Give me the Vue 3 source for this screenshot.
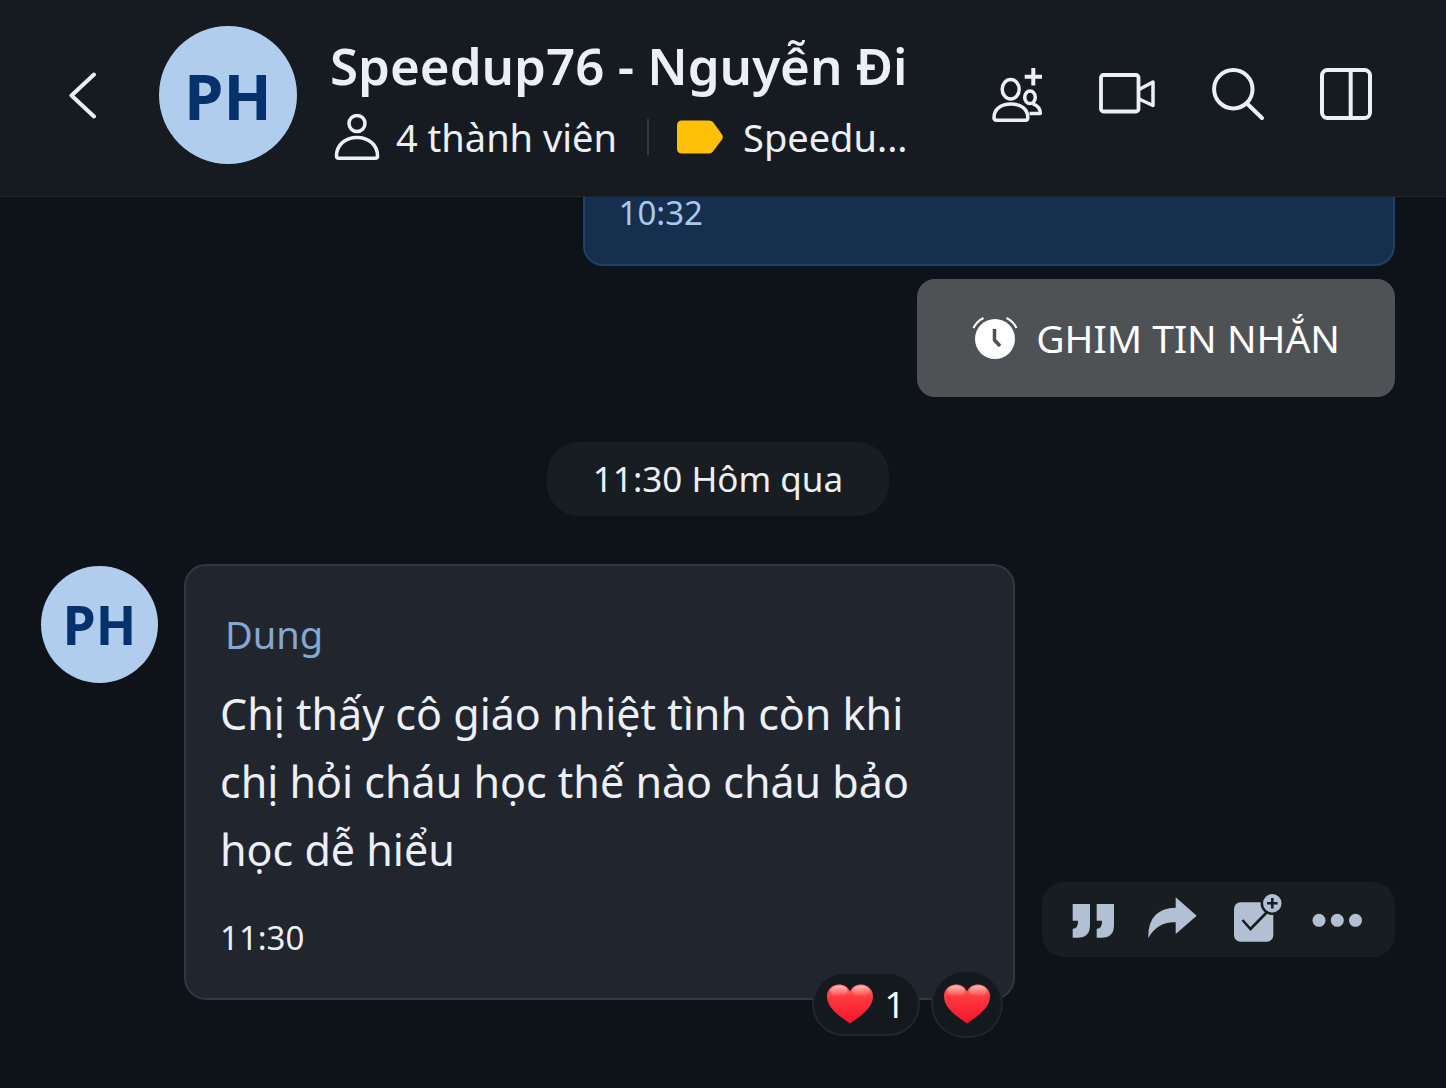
<template>
  <div class="chat">
    <header class="chat-header">
      <button class="icon-btn" type="button" aria-label="Quay lại">
        <svg width="28" height="48" viewBox="0 0 28 48" fill="none" stroke="currentColor" stroke-width="4" stroke-linecap="round" stroke-linejoin="round">
          <path d="M26 3.500 3.500 24.500 26 45.500" />
        </svg>
      </button>
      <div class="avatar avatar-large">PH</div>
      <div class="chat-info">
        <h1 class="chat-title">{{ chat.title }}</h1>
        <div class="chat-meta">
          <svg class="meta-user" width="46" height="46" viewBox="0 0 46 46" fill="none" stroke="currentColor" stroke-width="3.500" stroke-linejoin="round">
            <circle cx="23" cy="9.500" r="8" />
            <path d="M2.500 42c0-11 8.500-18.500 20.500-18.500S43.500 31 43.500 42c0 1.500-.7 2.200-2.200 2.200H4.700c-1.500 0-2.200-.7-2.200-2.200z" />
          </svg>
          <span>{{ chat.members }} thành viên</span>
          <span class="meta-divider"></span>
          <svg class="meta-tag" width="46" height="34" viewBox="0 0 46 34" fill="#ffc107">
            <path d="M5 .5h27q2.500 0 4 1.500l9 12.500q1.600 2.500 0 5L36 31.500q-1.500 2-4 2H5q-5 0-5-5v-23q0-5 5-5z" />
          </svg>
          <span>{{ chat.label }}</span>
        </div>
      </div>
      <nav class="chat-actions">
        <button class="icon-btn" type="button" aria-label="Thêm thành viên">
          <svg width="56" height="56" viewBox="0 0 56 56" fill="none" stroke="currentColor" stroke-width="3.500" stroke-linejoin="round">
            <ellipse cx="21.700" cy="22.300" rx="8.500" ry="9.700" />
            <path d="M5 50.500C5 42 12 37 22 37s16.800 5 16.800 13.500c0 1.700-.8 2.700-2.300 2.700h-29C5.800 53.200 5 52.200 5 50.500z" />
            <ellipse cx="41" cy="30.300" rx="5.300" ry="6.300" />
            <path d="M40.500 46.500h10.800q0-7-7.500-9.600" />
            <path d="M44.300 1v17.400M35.700 9.700H53" stroke-width="4" />
          </svg>
        </button>
        <button class="icon-btn" type="button" aria-label="Gọi video">
          <svg width="56" height="56" viewBox="0 0 56 56" fill="none" stroke="currentColor" stroke-width="3.800" stroke-linejoin="round">
            <rect x="2" y="8" width="37.500" height="36.500" rx="2.500" />
            <path d="M40 22.500 54 15v23.500L40 32" stroke-width="3.500" />
          </svg>
        </button>
        <button class="icon-btn" type="button" aria-label="Tìm kiếm">
          <svg width="56" height="56" viewBox="0 0 56 56" fill="none" stroke="currentColor" stroke-width="4" stroke-linecap="round">
            <circle cx="24.300" cy="22.200" r="19.200" />
            <path d="M38 36.500 53 51" />
          </svg>
        </button>
        <button class="icon-btn" type="button" aria-label="Thông tin hội thoại">
          <svg width="56" height="56" viewBox="0 0 56 56" fill="none" stroke="currentColor" stroke-width="4">
            <rect x="3" y="3" width="48" height="48" rx="5.500" />
            <path d="M31.700 3v48" />
          </svg>
        </button>
      </nav>
    </header>

    <main class="chat-body">
      <div class="bubble-out">
        <time>10:32</time>
      </div>
      <button class="pin-btn" type="button">
        <svg width="46" height="46" viewBox="0 0 46 46" fill="none">
          <circle cx="23" cy="24" r="20" fill="#fff" />
          <path d="M22.500 14v11l5.500 6" stroke="#4f5255" stroke-width="3.500" />
          <path d="M1.500 13Q4.500 6.500 11.500 3M44.500 13Q41.500 6.500 34.500 3" stroke="#fff" stroke-width="2" />
        </svg>
        GHIM TIN NHẮN
      </button>

      <div class="date-pill">11:30 Hôm qua</div>

      <div class="message-row">
        <div class="avatar">PH</div>
        <article class="bubble-in">
          <div class="sender">{{ message.sender }}</div>
          <p class="message-text">{{ message.text }}</p>
          <time class="message-time">{{ message.time }}</time>
          <div class="reactions">
            <button class="reaction" type="button" aria-label="Đã thả tim">
              <svg class="heart" width="46" height="40" viewBox="0 0 46 40">
                <defs>
                  <linearGradient id="heart-fill" x1="0" y1="0" x2="0" y2="1">
                    <stop offset="0" stop-color="#ff7870" />
                    <stop offset=".32" stop-color="#ff3a40" />
                    <stop offset="1" stop-color="#f2152b" />
                  </linearGradient>
                  <linearGradient id="heart-shine" x1="0" y1="0" x2="0" y2="1">
                    <stop offset="0" stop-color="#fff" stop-opacity=".5" />
                    <stop offset="1" stop-color="#fff" stop-opacity="0" />
                  </linearGradient>
                </defs>
                <path :d="heartPath" fill="url(#heart-fill)" />
                <ellipse cx="12" cy="7" rx="8.500" ry="5.500" fill="url(#heart-shine)" />
                <ellipse cx="34" cy="7" rx="8.500" ry="5.500" fill="url(#heart-shine)" />
              </svg>
              <span>{{ message.likes }}</span>
            </button>
            <button class="reaction reaction-add" type="button" aria-label="Thả tim">
              <svg class="heart" width="46" height="40" viewBox="0 0 46 40">
                <path :d="heartPath" fill="url(#heart-fill)" />
                <ellipse cx="12" cy="7" rx="8.500" ry="5.500" fill="url(#heart-shine)" />
                <ellipse cx="34" cy="7" rx="8.500" ry="5.500" fill="url(#heart-shine)" />
              </svg>
            </button>
          </div>
        </article>
        <div class="message-tools">
          <button class="icon-btn" type="button" aria-label="Trả lời">
            <svg width="52" height="52" viewBox="0 0 52 52" fill="currentColor">
              <path d="M5.700 11H23v21q0 12.700-12.500 12.700H5.700v-9q5.600 0 5.300-8H5.700z" />
              <path d="M29.700 11H47v21q0 12.700-12.500 12.700h-4.800v-9q5.600 0 5.300-8h-5.300z" />
            </svg>
          </button>
          <button class="icon-btn" type="button" aria-label="Chia sẻ">
            <svg width="52" height="52" viewBox="0 0 52 52" fill="currentColor">
              <path d="M27.700 4.300 48.700 22.700l-21 18.300V29.300Q9.500 28.500.3 45-.5 15.500 27.700 14.700z" />
            </svg>
          </button>
          <button class="icon-btn" type="button" aria-label="Giao việc">
            <svg width="52" height="52" viewBox="0 -1 52 52" fill="currentColor" overflow="visible">
              <rect x="5" y="8.300" width="39.300" height="39.400" rx="6.500" />
              <path d="M13.500 26l8 9 19-19.500" fill="none" stroke="#181d22" stroke-width="2.600" />
              <circle cx="43.300" cy="9.300" r="10.500" stroke="#181d22" stroke-width="2.500" />
              <path d="M43.300 4v10.600M38 9.300h10.600" stroke="#181d22" stroke-width="2.600" />
            </svg>
          </button>
          <button class="icon-btn" type="button" aria-label="Thêm">
            <svg width="52" height="52" viewBox="0 0 52 52" fill="currentColor">
              <circle cx="9" cy="27.300" r="6.500" />
              <circle cx="27.300" cy="27.300" r="6.500" />
              <circle cx="45.500" cy="27.300" r="6.500" />
            </svg>
          </button>
        </div>
      </div>
    </main>
  </div>
</template>

<script setup>
const chat = {
  title: 'Speedup76 - Nguyễn Đi',
  members: 4,
  label: 'Speedu...'
}

const message = {
  sender: 'Dung',
  text: 'Chị thấy cô giáo nhiệt tình còn khi chị hỏi cháu học thế nào cháu bảo học dễ hiểu',
  time: '11:30',
  likes: 1
}

const heartPath = 'M23 39.500C17 35 0 25.500 0 12.500 0 5.500 5 .5 12 .5c5 0 9 2.500 11 7C25 3 29 .5 34 .5c7 0 12 5 12 12C46 25.500 29 35 23 39.500z'
</script>

<style>
body {
  margin: 0;
  background: #0e1219;
}
</style>

<style scoped>
.chat {
  min-height: 100vh;
  background: #0e1219;
  color: #eceff6;
  font-family: 'Noto Sans', 'Open Sans', sans-serif;
}

button {
  font: inherit;
  cursor: pointer;
}

svg {
  display: block;
  flex-shrink: 0;
}

.icon-btn {
  padding: 0;
  border: none;
  background: none;
  color: inherit;
}

.chat-header {
  display: flex;
  align-items: center;
  padding: 26px 71px 32px 68px;
  background: #161b21;
  border-bottom: 1px solid #20262b;
}

.avatar {
  display: flex;
  align-items: center;
  justify-content: center;
  flex-shrink: 0;
  width: 117px;
  height: 117px;
  margin-top: 2px;
  border-radius: 50%;
  background: #b1cdee;
  color: #06316b;
  font-size: 53px;
  font-weight: 700;
}

.avatar-large {
  width: 138px;
  height: 138px;
  margin: 0 33px 0 63px;
  font-size: 63px;
}

.chat-info {
  flex: 1;
  min-width: 0;
  padding-top: 8px;
}

.chat-title {
  margin: 0 0 14px;
  font-size: 51px;
  font-weight: 600;
  line-height: 62px;
  white-space: nowrap;
}

.chat-meta {
  display: flex;
  align-items: center;
  padding-left: 4px;
  font-size: 38px;
  line-height: 54px;
  white-space: nowrap;
}

.meta-user {
  margin-right: 16px;
}

.meta-divider {
  width: 2px;
  height: 36px;
  margin: 0 28px 0 30px;
  background: #32383e;
}

.meta-tag {
  margin-right: 20px;
}

.chat-actions {
  display: flex;
  gap: 54px;
}

.chat-body {
  display: flex;
  flex-direction: column;
  padding: 0 51px 48px 41px;
}

.bubble-out {
  align-self: flex-end;
  box-sizing: border-box;
  width: 60%;
  padding: 0 34px 35px;
  background: #162f4e;
  border: 2px solid #1e4366;
  border-top: none;
  border-radius: 0 0 20px 20px;
  color: #a9c8ea;
  font-size: 33px;
  line-height: 32px;
}

.pin-btn {
  display: flex;
  align-items: center;
  align-self: flex-end;
  gap: 18px;
  margin-top: 13px;
  padding: 29px 55px;
  border: none;
  border-radius: 18px;
  background: #4f5255;
  color: #fff;
  font-size: 39px;
  line-height: 60px;
}

.date-pill {
  align-self: center;
  margin: 45px 0 48px;
  padding: 0 46px;
  border-radius: 32px;
  background: #181d22;
  font-size: 35px;
  line-height: 74px;
}

.message-row {
  display: flex;
  align-items: flex-start;
}

.bubble-in {
  position: relative;
  flex: 1;
  margin: 0 27px 0 26px;
  padding: 42px 60px 30px 34px;
  border: 2px solid #33383f;
  border-radius: 22px;
  background: #21262e;
}

.sender {
  padding-left: 5px;
  color: #85a8d0;
  font-size: 38px;
  line-height: 52px;
}

.message-text {
  margin: 20px 0 24px;
  font-size: 43px;
  line-height: 68px;
}

.message-time {
  display: block;
  font-size: 33px;
  line-height: 60px;
}

.reactions {
  position: absolute;
  right: 10px;
  bottom: -40px;
  display: flex;
  align-items: center;
  gap: 11px;
}

.reaction {
  display: flex;
  align-items: center;
  gap: 11px;
  height: 64px;
  padding: 0 13px;
  border: 2px solid #20272c;
  border-radius: 34px;
  background: #14191e;
  color: #fff;
  font-size: 36px;
}

.reaction-add {
  justify-content: center;
  width: 72px;
  height: 68px;
  padding: 0;
}

.message-tools {
  display: flex;
  align-self: flex-end;
  align-items: center;
  gap: 29px;
  margin-bottom: 43px;
  padding: 11px 33px 12px 25px;
  border-radius: 22px;
  background: #181d22;
  color: #b3bfd3;
}
</style>
